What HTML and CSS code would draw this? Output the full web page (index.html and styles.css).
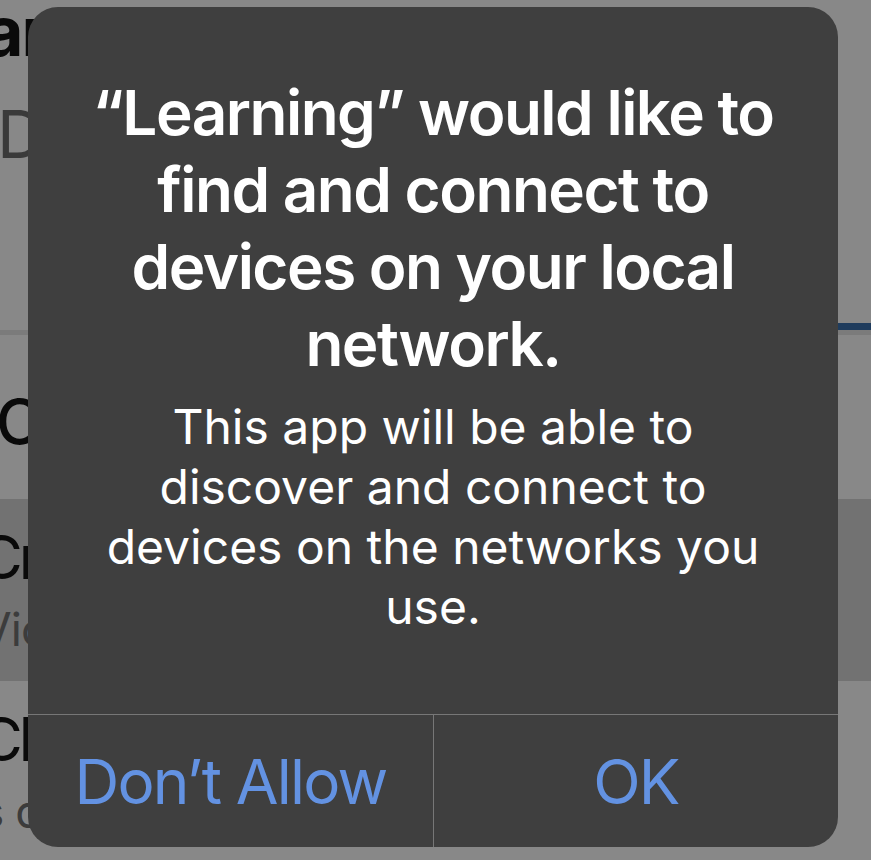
FILE: index.html
```html
<!DOCTYPE html>
<html lang="en">
<head>
<meta charset="utf-8">
<title>Local Network Permission</title>
<link rel="stylesheet" href="styles.css">
</head>
<body>
<div class="screen">
  <div class="bg">
    <div class="bg-title">ar</div>
    <div class="bg-subtitle">D</div>
    <div class="bg-tabs"><span class="tab-indicator"></span></div>
    <div class="bg-section">C</div>
    <div class="bg-row selected">
      <div class="row-title">Cr</div>
      <div class="row-sub">Vic</div>
    </div>
    <div class="bg-row">
      <div class="row-title">Ch</div>
      <div class="row-sub">s q</div>
    </div>
  </div>

  <div class="alert" role="alertdialog">
    <div class="alert-body">
      <h1 class="alert-title">“Learning” would like to<br>find and connect to<br>devices on your local<br>network.</h1>
      <p class="alert-message">This app will be able to<br>discover and connect to<br>devices on the networks you<br>use.</p>
    </div>
    <div class="alert-actions">
      <button class="alert-btn">Don’t Allow</button>
      <button class="alert-btn">OK</button>
    </div>
  </div>
</div>
</body>
</html>
```

FILE: styles.css
```css
* { box-sizing: border-box; }

html, body {
  margin: 0;
  padding: 0;
  width: 871px;
  height: 860px;
  overflow: hidden;
  background: #888888;
  font-family: Inter, "Noto Sans", sans-serif;
}

.screen {
  position: relative;
  width: 871px;
  height: 860px;
  overflow: hidden;
}

.bg {
  display: flex;
  flex-direction: column;
}

.bg-title {
  font-size: 68px;
  font-weight: 700;
  line-height: 62px;
  height: 62px;
  color: #0a0a0a;
  margin-left: -16px;
  letter-spacing: -2px;
}

.bg-subtitle {
  margin-top: 32px;
  font-size: 66px;
  line-height: 80px;
  height: 80px;
  color: #3a3a3a;
  margin-left: -3px;
}

.bg-tabs {
  position: relative;
  margin-top: 149px;
  height: 12px;
  border-bottom: 5px solid #7b7b7b;
}

.tab-indicator {
  position: absolute;
  left: 500px;
  right: 0;
  top: 0;
  height: 7px;
  background: #1f3c5d;
}

.bg-section {
  margin-top: 49px;
  font-size: 62px;
  font-weight: 500;
  line-height: 76px;
  height: 76px;
  color: #0a0a0a;
  margin-left: -4px;
}

.bg-row {
  height: 182px;
  padding-top: 22px;
}

.bg-section + .bg-row { margin-top: 39px; }

.bg-row.selected { background: #727272; }

.row-title {
  font-size: 60px;
  line-height: 72px;
  color: #0a0a0a;
  margin-left: -21px;
  letter-spacing: -4px;
}

.row-sub {
  margin-top: 6px;
  font-size: 46px;
  line-height: 60px;
  color: #3c3c3c;
  margin-left: -20px;
  letter-spacing: -1px;
}

.alert {
  position: absolute;
  left: 28px;
  top: 7px;
  width: 810px;
  height: 840px;
  background: #3f3f3f;
  border-radius: 30px;
  display: flex;
  flex-direction: column;
  overflow: hidden;
}

.alert-body {
  flex: 1;
  padding-top: 67px;
  display: flex;
  flex-direction: column;
  align-items: center;
  text-align: center;
  color: #ffffff;
}

.alert-title {
  margin: 0;
  font-size: 62px;
  font-weight: 600;
  line-height: 77px;
  letter-spacing: -1.5px;
  white-space: nowrap;
}

.alert-message {
  margin: 15px 0 0;
  font-size: 48px;
  font-weight: 400;
  line-height: 60px;
  white-space: nowrap;
}

.alert-actions {
  height: 133px;
  display: grid;
  grid-template-columns: 405px 1fr;
  border-top: 1px solid #777777;
}

.alert-btn {
  appearance: none;
  background: transparent;
  border: 0;
  padding: 0;
  margin: 0;
  font-family: Inter, "Noto Sans", sans-serif;
  font-size: 62px;
  font-weight: 400;
  line-height: 75px;
  letter-spacing: -1.8px;
  color: #6392e2;
  display: flex;
  align-items: center;
  justify-content: center;
}

.alert-btn + .alert-btn {
  border-left: 1px solid #777777;
}
```
